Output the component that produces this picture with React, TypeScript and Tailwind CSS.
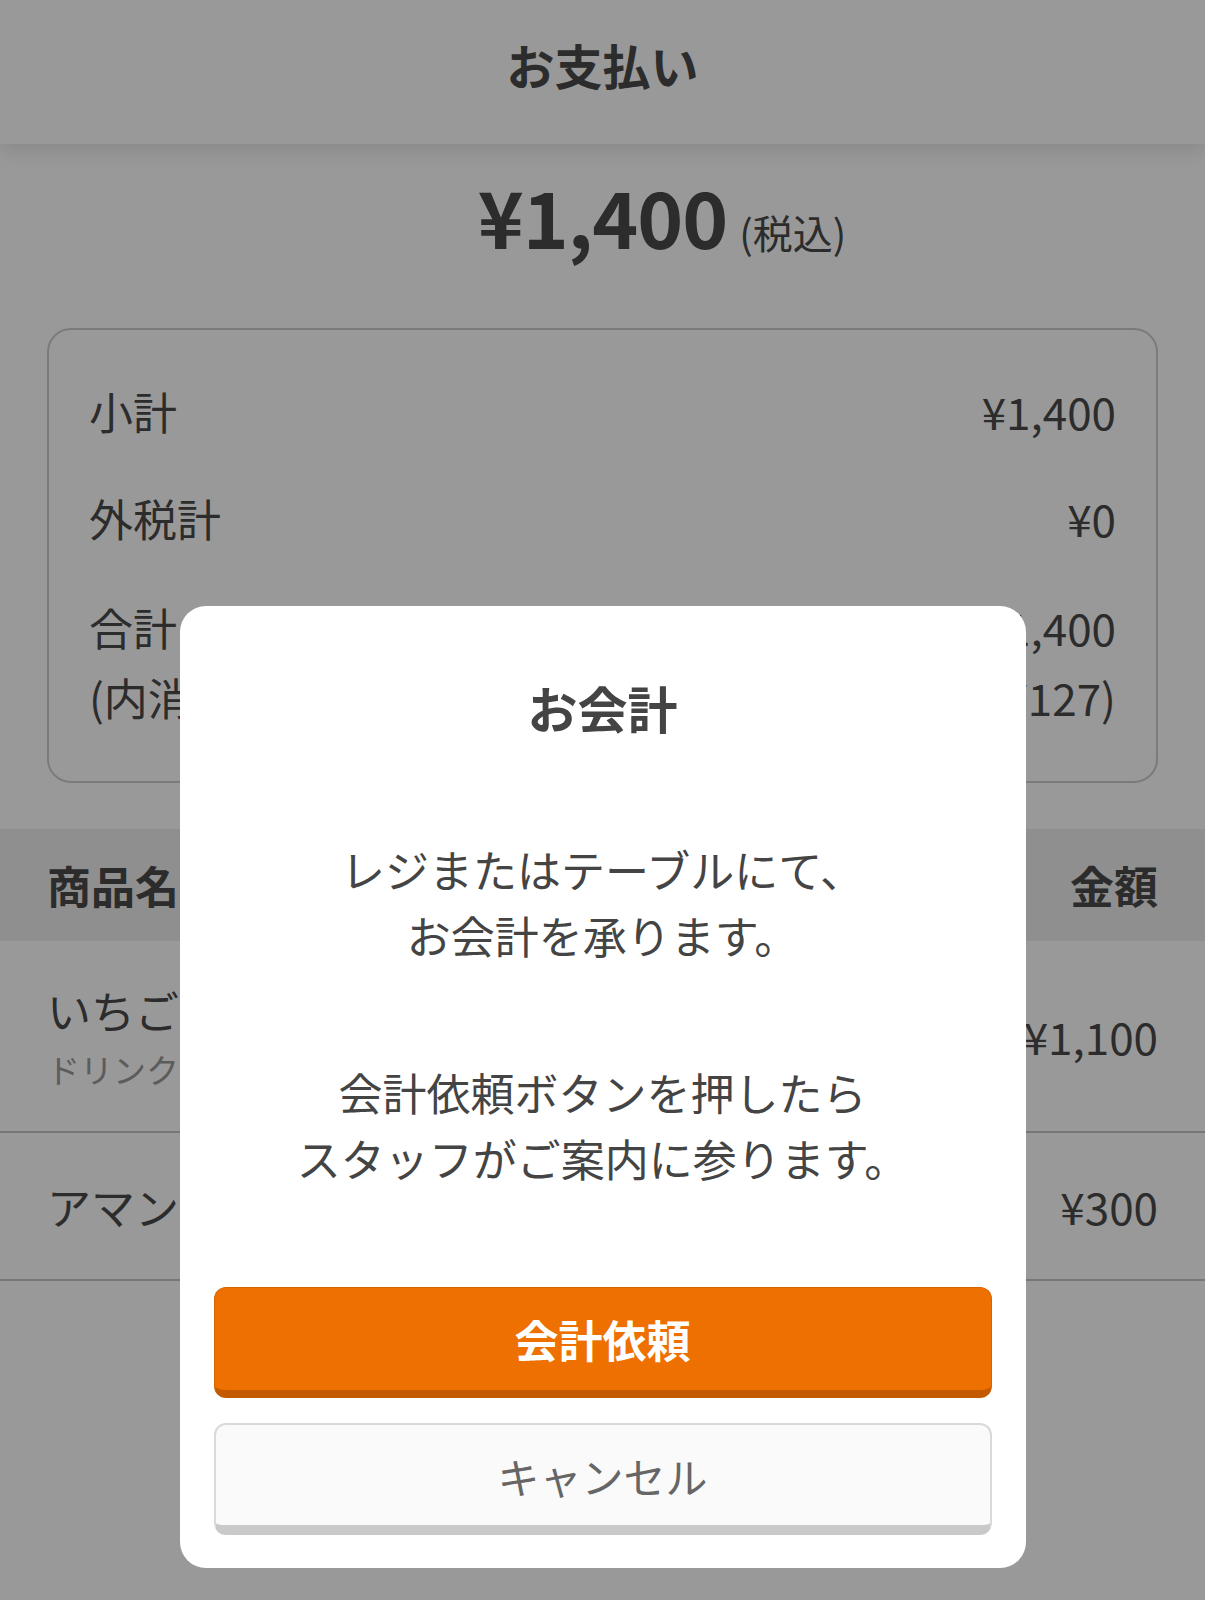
import React from 'react'

type Row = { label: string; value: string; sub?: string; subValue?: string }

const summary: Row[] = [
    { label: '小計', value: '¥1,400' },
    { label: '外税計', value: '¥0' },
    { label: '合計', value: '¥1,400', sub: '(内消費税)', subValue: '(¥127)' },
]

const items = [
    { name: 'いちごミルク', category: 'ドリンク', price: '¥1,100' },
    { name: 'アマンドラテ', category: '', price: '¥300' },
]

function CheckoutModal() {
    return (
        <div className="absolute inset-0 z-20 bg-black/40 flex justify-center items-end pb-[32px]">
            <div className="w-[846px] bg-white rounded-[26px] px-[34px] pt-[64px] pb-[33px] flex flex-col items-stretch">
                <h2 className="text-center text-[50px] leading-[75px] font-bold text-[#444]">お会計</h2>
                <p className="mt-[91px] text-center text-[44px] leading-[66px] text-[#444]">
                    レジまたはテーブルにて、<br />お会計を承ります。
                </p>
                <p className="mt-[91px] text-center text-[44px] leading-[66px] text-[#444]">
                    会計依頼ボタンを押したら<br />スタッフがご案内に参ります。
                </p>
                <button
                    type="button"
                    className="mt-[96px] h-[111px] rounded-[12px] bg-[#ee7000] border border-[#d86400] border-b-[8px] border-b-[#c45a00] text-white text-[44px] font-bold"
                >
                    会計依頼
                </button>
                <button
                    type="button"
                    className="mt-[25px] h-[112px] rounded-[12px] bg-[#fafafa] border-2 border-[#d9d9d9] border-b-[10px] border-b-[#c9c9c9] text-[#666] text-[42px]"
                >
                    キャンセル
                </button>
            </div>
        </div>
    )
}

export default function App() {
    return (
        <div className="relative h-[1600px] w-full overflow-hidden bg-white text-[#4a4a4a] font-['Noto_Sans_CJK_JP','Noto_Sans',sans-serif]">
            <header className="relative z-10 h-[144px] bg-white shadow-[0_8px_18px_rgba(0,0,0,0.10)] flex justify-center pt-[34px]">
                <h1 className="text-[48px] leading-[60px] font-bold">お支払い</h1>
            </header>

            <div className="grid grid-cols-[1fr_auto_1fr] items-baseline pt-[16px] h-[184px]">
                <div />
                <span className="text-[78px] leading-[110px] font-bold tracking-[-1px]">¥1,400</span>
                <span className="ml-[12px] text-[40px]">(税込)</span>
            </div>

            <div className="mx-[47px] rounded-[24px] border-2 border-[#cdcdcd] px-[40px] pt-[48px] pb-[49px] flex flex-col gap-[41px]">
                {summary.map(r => (
                    <div key={r.label} className="flex justify-between text-[44px]">
                        <div className={r.sub ? 'leading-[70px]' : 'leading-[66px]'}>
                            <div>{r.label}</div>
                            {r.sub && <div>{r.sub}</div>}
                        </div>
                        <div className={`text-right ${r.sub ? 'leading-[70px]' : 'leading-[66px]'}`}>
                            <div>{r.value}</div>
                            {r.subValue && <div>{r.subValue}</div>}
                        </div>
                    </div>
                ))}
            </div>

            <div className="mt-[46px] h-[112px] bg-[#eeeeee] px-[47px] flex items-center justify-between text-[44px] font-bold">
                <span>商品名</span>
                <span>金額</span>
            </div>

            {items.map(item => (
                <div
                    key={item.name}
                    className={`px-[47px] border-b-2 border-[#c6c6c6] flex justify-between items-center ${item.category ? 'py-[41px]' : 'py-[45px]'}`}
                >
                    <div className="flex flex-col gap-[10px]">
                        <span className="text-[44px] leading-[56px]">{item.name}</span>
                        {item.category && <span className="text-[33px] leading-[42px] text-[#999]">{item.category}</span>}
                    </div>
                    <span className="text-[44px] leading-[56px]">{item.price}</span>
                </div>
            ))}

            <CheckoutModal />
        </div>
    )
}
